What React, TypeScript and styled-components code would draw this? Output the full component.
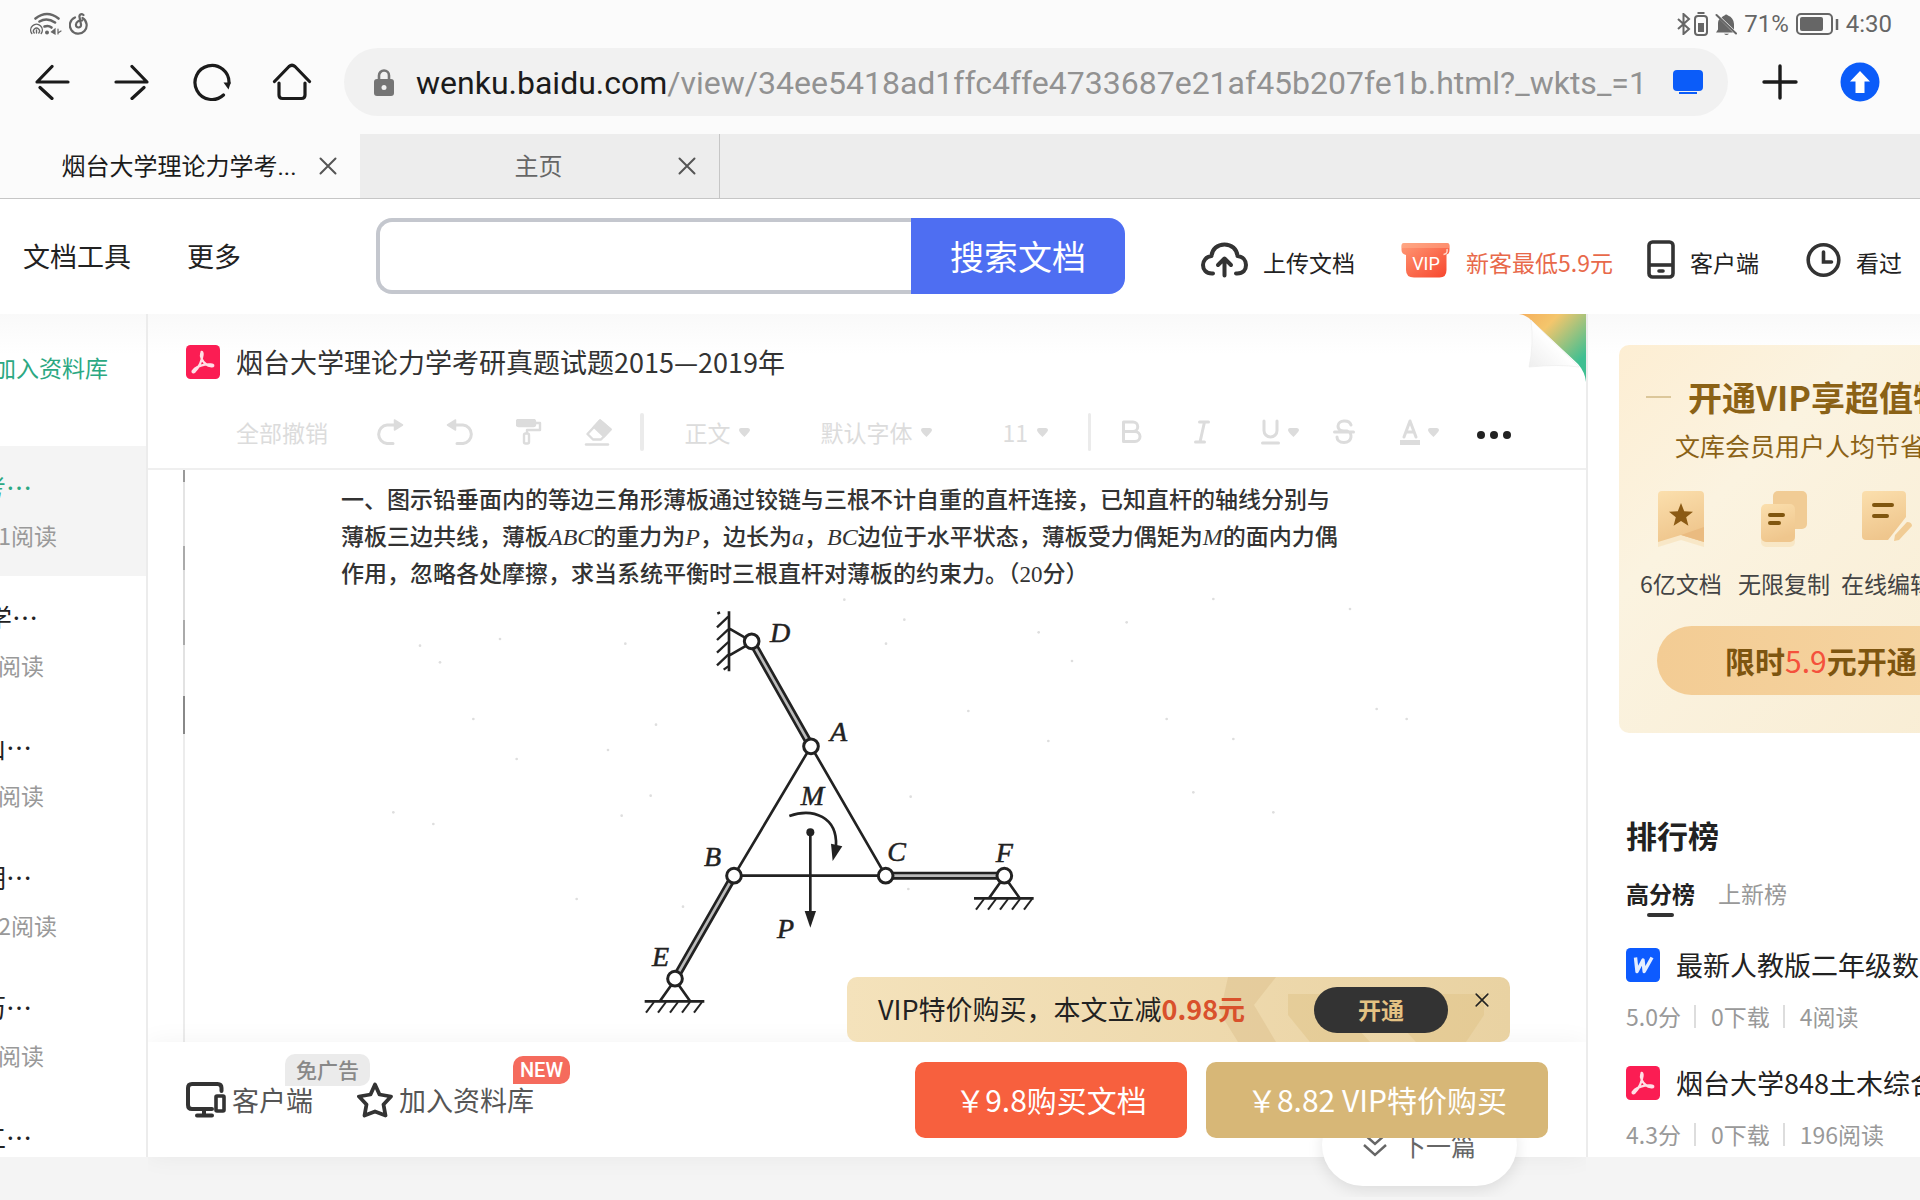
import React from "react";
import styled, { createGlobalStyle } from "styled-components";

const cjk = `"Noto Sans CJK SC", sans-serif`;
const latin = `Roboto, "Noto Sans CJK SC", sans-serif`;

const Global = createGlobalStyle`
  *, *::before, *::after { box-sizing: border-box; }
  html, body { margin: 0; padding: 0; }
  body { background: #f4f4f4; font-family: ${cjk}; color: #222; overflow: hidden; }
  button, input, select { font: inherit; color: inherit; margin: 0; padding: 0; border: 0; background: none; }
  button { cursor: pointer; white-space: nowrap; }
  a { color: inherit; text-decoration: none; }
  h1, h2, h3, p, ul { margin: 0; padding: 0; font-weight: 400; }
  ul { list-style: none; }
  svg { display: block; flex: none; }
`;

const Page = styled.div`
  min-height: 100vh;
  height: 100vh;
  display: flex;
  flex-direction: column;
  overflow: hidden;
  line-height: 36px;
  white-space: nowrap;
`;

/* ---------- device status bar ---------- */

const StatusBar = styled.div`
  height: 48px;
  flex: none;
  display: flex;
  align-items: center;
  justify-content: space-between;
  padding: 0 28px 0 30px;
  background: #fbfbfb;
  color: #666;
  font: 24px/32px ${latin};
`;

const StatusGroup = styled.div`
  display: flex;
  align-items: center;
  gap: ${(p: { $gap: number }) => p.$gap}px;
`;

/* ---------- browser chrome ---------- */

const NavBar = styled.nav`
  height: 86px;
  flex: none;
  display: flex;
  align-items: flex-start;
  padding: 0 40px 0 32px;
  background: #fbfbfb;
`;

const NavButtons = styled.div`
  display: flex;
  gap: 40px;
  height: 68px;
  align-items: center;
`;

const IconButton = styled.button`
  display: flex;
  align-items: center;
  justify-content: center;
  width: 40px;
  height: 40px;
`;

const AddressPill = styled.div`
  flex: 1;
  min-width: 0;
  height: 68px;
  margin: 0 32px;
  padding: 0 24px 0 28px;
  border-radius: 34px;
  background: #f1f1f1;
  display: flex;
  align-items: center;
`;

const Address = styled.div`
  flex: 1;
  min-width: 0;
  margin-left: 20px;
  padding-top: 2px;
  overflow: hidden;
  font: 32px/40px ${latin};
  color: #929292;
`;

const Host = styled.span`
  color: #1b1b1b;
`;

const TabStrip = styled.div`
  height: 65px;
  flex: none;
  display: flex;
  background: #ededed;
  border-bottom: 1px solid #c6c6c6;
`;

const TabItem = styled.div<{ $active?: boolean }>`
  width: 360px;
  height: 64px;
  display: flex;
  align-items: center;
  padding: 0 12px 0 50px;
  background: ${(p) => (p.$active ? "#fbfbfb" : "#ededed")};
  border-right: ${(p) => (p.$active ? "0" : "1px solid #c6c6c6")};
  color: ${(p) => (p.$active ? "#1b1b1b" : "#666")};
  font: 24px/36px ${latin};
`;

const TabTitle = styled.button`
  flex: 1;
  padding-top: 2px;
  text-align: center;
`;

const TabClose = styled(IconButton)`
  color: #555;
`;

/* ---------- site header ---------- */

const SiteHeader = styled.header`
  height: 115px;
  flex: none;
  display: flex;
  align-items: center;
  padding: 0 18px 2px 23px;
  background: #fff;
`;

const MenuLink = styled.a`
  font-size: 27px;
  margin-right: 56px;
`;

const SearchForm = styled.form`
  display: flex;
  flex: 0 0 749px;
  height: 76px;
  margin-left: 79px;
`;

const SearchBox = styled.input`
  flex: 1;
  min-width: 0;
  padding: 0 24px;
  border: 4px solid #c4c7ce;
  border-right: 0;
  border-radius: 16px 0 0 16px;
  background: #fff;
  font-size: 27px;
`;

const SearchButton = styled.button`
  width: 214px;
  border-radius: 0 16px 16px 0;
  background: #4e6ef2;
  color: #fff;
  font-size: 34px;
`;

const HeaderTools = styled.div`
  margin-left: auto;
  display: flex;
  align-items: center;
  padding-top: 8px;
`;

const ToolLink = styled.a<{ $accent?: boolean; $gap: number; $after?: number }>`
  display: flex;
  align-items: center;
  gap: ${(p) => p.$gap}px;
  margin-right: ${(p) => p.$after ?? 0}px;
  font-size: 23px;
  color: ${(p) => (p.$accent ? "#e8694a" : "#222")};

  span { padding-top: 4px; }
`;

/* ---------- three column body ---------- */

const Columns = styled.div`
  flex: 1;
  min-height: 0;
  margin-bottom: 43px;
  display: grid;
  grid-template-columns: 148px minmax(0, 1fr) 332px;
  background: linear-gradient(#f9f9f9, #fff 40px);
`;

const Sidebar = styled.aside`
  border-right: 2px solid #ececec;
  overflow: hidden;
`;

const LibraryLink = styled.a`
  display: flex;
  justify-content: flex-end;
  height: 132px;
  padding: 35px 38px 0 0;
  font-size: 23px;
  color: #2ba882;
`;

const SideItem = styled.li<{ $active?: boolean }>`
  height: 130px;
  padding-top: 23px;
  overflow: hidden;
  background: ${(p) => (p.$active ? "#f4f4f4" : "transparent")};
`;

const SideTitle = styled.a<{ $width: number; $active?: boolean }>`
  display: flex;
  justify-content: flex-end;
  width: ${(p) => p.$width}px;
  overflow: hidden;
  font-size: 26px;
  color: ${(p) => (p.$active ? "#2ba882" : "#222")};
`;

const SideMeta = styled.p<{ $width: number }>`
  display: flex;
  justify-content: flex-end;
  width: ${(p) => p.$width}px;
  margin-top: 12px;
  overflow: hidden;
  font-size: 23px;
  color: #999;
`;

const Main = styled.main`
  position: relative;
  min-width: 0;
  display: flex;
  flex-direction: column;
  border-right: 2px solid #ececec;
`;

const PageFold = styled.div`
  position: absolute;
  top: 0;
  right: 0;
`;

const DocHeading = styled.div`
  flex: none;
  display: flex;
  align-items: center;
  gap: 16px;
  height: 95px;
  padding: 0 0 0 38px;
`;

const DocTitle = styled.h1`
  font-size: 27px;
  color: #333;
`;

const Toolbar = styled.div`
  flex: none;
  display: flex;
  align-items: center;
  height: 61px;
  padding: 0 75px 13px 88px;
  border-bottom: 2px solid #efefef;
  color: #dcdcdc;
  font-size: 23px;
`;

const ToolGroup = styled.div<{ $gap: number; $pad: string }>`
  display: flex;
  align-items: center;
  gap: ${(p) => p.$gap}px;
  padding: ${(p) => p.$pad};
`;

const ToolButton = styled.button`
  display: flex;
  align-items: center;
  gap: 8px;
`;

const Divider = styled.span`
  width: 4px;
  height: 38px;
  border-radius: 2px;
  background: #ebebeb;
`;

const Picker = styled.label`
  display: flex;
  align-items: center;
  gap: 8px;
`;

const PickerSelect = styled.select`
  appearance: none;
  height: 36px;
  outline: 0;
`;

const Scroll = styled.section`
  flex: 1;
  min-height: 0;
  overflow: hidden;
  margin-left: 35px;
  padding: 12px 0 0 158px;
  background: linear-gradient(
      #999 0 12px, #e4e4e4 12px 76px, #aaa 76px 100px, #ddd 100px 150px,
      #aaa 150px 175px, #e2e2e2 175px 226px, #888 226px 264px, #ececec 264px
    )
    0 0 / 2px 100% no-repeat;
`;

const Problem = styled.p`
  font: 500 23px/37px "Liberation Serif", ${cjk};
  color: #333;

  i { font-size: 24px; }
`;

const Figure = styled.svg`
  margin: 16px 0 0 299px;
  overflow: visible;
`;

const BuyBar = styled.div`
  position: relative;
  flex: none;
  height: 115px;
  display: flex;
  align-items: center;
  padding: 0 38px 0 38px;
  background: #fff;
  box-shadow: 0 0 24px rgba(0, 0, 0, 0.05);
  clip-path: inset(-24px 0 -40px 0);
`;

const BarAction = styled.button<{ $after: number }>`
  position: relative;
  display: flex;
  align-items: center;
  gap: 6px;
  margin-right: ${(p) => p.$after}px;
  font-size: 27px;
  color: #555;
`;

const Tag = styled.span<{ $hot?: boolean }>`
  position: absolute;
  bottom: ${(p) => (p.$hot ? 34 : 32)}px;
  right: ${(p) => (p.$hot ? -36 : -57)}px;
  height: ${(p) => (p.$hot ? 28 : 32)}px;
  padding: 0 ${(p) => (p.$hot ? 7 : 11)}px;
  border-radius: 10px 10px 10px 0;
  background: ${(p) => (p.$hot ? "#f56b5d" : "#ebebeb")};
  color: ${(p) => (p.$hot ? "#fff" : "#888")};
  font: ${(p) => (p.$hot ? `500 20px/28px ${latin}` : `500 21px/30px ${cjk}`)};
`;

const BuyButton = styled.button<{ $gold?: boolean }>`
  position: relative;
  z-index: 2;
  width: ${(p) => (p.$gold ? 342 : 272)}px;
  height: 76px;
  margin-left: ${(p) => (p.$gold ? "19px" : "auto")};
  padding-bottom: 2px;
  border-radius: 10px;
  background: ${(p) => (p.$gold ? "#d7b777" : "#f7603e")};
  color: #fff;
  font-size: 30px;
`;

const NextPill = styled.button`
  position: absolute;
  z-index: 1;
  right: 69px;
  bottom: -29px;
  width: 195px;
  height: 82px;
  border-radius: 41px;
  background: #fff;
  box-shadow: 0 4px 16px rgba(0, 0, 0, 0.1);
  display: flex;
  align-items: center;
  justify-content: center;
  gap: 14px;
  color: #666;
  font-size: 25px;
`;

const Promo = styled.div`
  position: absolute;
  z-index: 3;
  right: 76px;
  bottom: 115px;
  width: 663px;
  height: 65px;
  display: flex;
  align-items: center;
  padding: 0 14px 0 31px;
  border-radius: 10px;
  overflow: hidden;
  background: linear-gradient(90deg, #f4e2bb, #e9d2a2);
  font-size: 27px;
`;

const PromoArt = styled.svg`
  position: absolute;
  right: 0;
  top: 0;
`;

const PromoText = styled.p`
  z-index: 1;
  padding-bottom: 2px;
`;

const Price = styled.strong`
  color: #d9512c;
`;

const OpenButton = styled.button`
  position: relative;
  width: 134px;
  height: 46px;
  margin-left: auto;
  padding-bottom: 2px;
  border-radius: 23px;
  background: #333;
  color: #e4c283;
  font-size: 23px;
  font-weight: 700;
`;

const PromoClose = styled.button`
  position: relative;
  width: 28px;
  height: 28px;
  margin: 0 0 20px 20px;
  display: flex;
  align-items: center;
  justify-content: center;
  color: #222;
`;

/* ---------- right column ---------- */

const Aside = styled.aside`
  min-width: 0;
  overflow: hidden;
  padding: 31px 0 0 31px;
`;

const VipCard = styled.section`
  width: 440px;
  height: 388px;
  border-radius: 10px;
  padding: 30px 0 0 16px;
  background: linear-gradient(135deg, #fdeed3, #fbf3e0 30%, #f8ecd2);
  color: #8b6216;
`;

const VipTitle = styled.h2`
  display: flex;
  align-items: center;
  gap: 17px;
  height: 44px;
  padding-left: 11px;
  font-size: 34px;
  font-weight: 700;

  &::before {
    content: "";
    width: 25px;
    height: 2px;
    background: #dcc79a;
  }
`;

const VipNote = styled.p`
  padding-left: 40px;
  margin-top: 8px;
  font-size: 25px;
`;

const Perks = styled.ul`
  display: flex;
  gap: 11px;
  margin-top: 28px;
`;

const Perk = styled.li`
  width: 92px;
  display: flex;
  flex-direction: column;
  align-items: center;
  gap: 14px;
  font-size: 23px;
  color: #444;
`;

const VipButton = styled.button`
  display: block;
  width: 360px;
  height: 69px;
  margin: 25px 0 0 22px;
  padding: 0 0 2px 68px;
  border-radius: 35px;
  background: linear-gradient(90deg, #f3cc94, #f6d6a4);
  color: #7d5510;
  font-size: 30px;
  font-weight: 700;
  text-align: left;
`;

const Deal = styled.span`
  color: #f4513c;
  font-weight: 400;
`;

const Ranking = styled.section`
  padding: 84px 0 0 7px;
`;

const RankHeading = styled.h2`
  font-size: 31px;
  font-weight: 700;
`;

const RankTabs = styled.div`
  display: flex;
  gap: 23px;
  margin-top: 22px;
  height: 46px;
`;

const RankTab = styled.button<{ $active?: boolean }>`
  height: 44px;
  display: flex;
  flex-direction: column;
  align-items: center;
  gap: 2px;
  font-size: 23px;
  line-height: 36px;
  font-weight: ${(p) => (p.$active ? 700 : 400)};
  color: ${(p) => (p.$active ? "#222" : "#999")};

  &::after {
    content: "";
    width: 27px;
    height: 4px;
    border-radius: 2px;
    background: ${(p) => (p.$active ? "#333" : "transparent")};
  }
`;

const RankItem = styled.li`
  height: 118px;
  padding-top: 26px;
`;

const RankLink = styled.a`
  display: flex;
  align-items: center;
  gap: 16px;
  font-size: 27px;
`;

const RankMeta = styled.p`
  display: flex;
  align-items: center;
  margin-top: 15px;
  font-size: 23px;
  color: #999;

  span + span {
    display: flex;
    align-items: center;
  }
  span + span::before {
    content: "";
    width: 2px;
    height: 23px;
    margin: 0 15px 0 13px;
    background: #ddd;
  }
`;

/* ---------- icons ---------- */

const Back = ({ flip }: { flip?: boolean }) => (
  <svg width="36" height="36" viewBox="0 0 36 36" fill="none" stroke="#1b1b1b" strokeWidth="3.2" strokeLinecap="round" strokeLinejoin="round" transform={flip ? "scale(-1 1)" : undefined}>
    <path d="M34 18H3L18 2.500M6 23.500L18 34.500" />
  </svg>
);

const Reload = () => (
  <svg width="40" height="40" viewBox="0 0 40 40" fill="none" stroke="#1b1b1b" strokeWidth="3.200" strokeLinecap="round">
    <path d="M31.500 33A17 17 0 1 1 37 21" />
    <path d="M31.500 20.500l5 7 2.300-7z" fill="#1b1b1b" stroke="none" />
  </svg>
);

const Home = () => (
  <svg width="40" height="40" viewBox="0 0 40 40" fill="none" stroke="#1b1b1b" strokeWidth="3.200" strokeLinecap="round" strokeLinejoin="round">
    <path d="M2.500 19.500L17 4.500q3-2.500 6 0L37.500 19.500" />
    <path d="M7 21v12q0 3.500 3.500 3.500h19q3.500 0 3.500-3.500V21" />
  </svg>
);

const Cross = ({ size, weight }: { size: number; weight: number }) => (
  <svg width={size} height={size} viewBox="0 0 18 18" stroke="currentColor" strokeWidth={weight} strokeLinecap="round">
    <path d="M1.500 1.500l15 15M16.500 1.500l-15 15" />
  </svg>
);

const PdfIcon = () => (
  <svg width="34" height="34" viewBox="0 0 34 34">
    <rect width="34" height="34" rx="4.500" fill="#fb1d53" />
    <path d="M15.300 7.500c-1.300 4 .8 9 5 12 2.500 1.600 6.500 2.600 7 1.300.5-1.600-4.500-1.900-8.500-1.200-4.700.8-10 3.500-12 6.200-.8 1.500.6 2.200 2 .8 3.200-3.500 7-10.500 7.800-16.800.3-2.800-.9-3.700-1.300-2.300z" fill="none" stroke="#ffdfe6" strokeWidth="2.200" strokeLinejoin="round" />
  </svg>
);

const WordIcon = () => (
  <svg width="34" height="34" viewBox="0 0 34 34">
    <rect width="34" height="34" rx="4.500" fill="#0d5bff" />
    <path d="M9.500 9.500l1.500 14 6-11.500 1.200 11.500L26 9.500" fill="none" stroke="#e4edff" strokeWidth="3.400" strokeLinejoin="round" />
  </svg>
);

const Caret = () => (
  <svg width="11" height="9" viewBox="0 0 11 9" fill="currentColor">
    <path d="M2 0h7q2 .3 2 2T5.500 9Q0 4 0 2T2 0z" />
  </svg>
);

const Turn = ({ flip }: { flip?: boolean }) => (
  <svg width="28" height="26" viewBox="0 0 28 26" fill="none" stroke="currentColor" strokeWidth="3" strokeLinecap="round" transform={flip ? "scale(-1 1)" : undefined}>
    <path d="M17 24.500h-6A9.300 9.300 0 0 1 11 6h8" />
    <path d="M18.500 1v10l8-5z" fill="currentColor" strokeWidth="1.500" strokeLinejoin="round" />
  </svg>
);

const Roller = () => (
  <svg width="26" height="26" viewBox="0 0 26 26" fill="none" stroke="currentColor" strokeWidth="2.400" strokeLinejoin="round">
    <rect x="1" y="1" width="18" height="6" rx="1.500" fill="currentColor" />
    <path d="M19 4h5v7H11v4" />
    <rect x="8" y="14.500" width="5" height="10" rx="1.500" />
  </svg>
);

const Eraser = () => (
  <svg width="28" height="27" viewBox="0 0 28 27" fill="none" stroke="currentColor" strokeWidth="2.400" strokeLinejoin="round" strokeLinecap="round">
    <path d="M2 25.500h22" />
    <path d="M9 20.500l-5.500-5.500L16 1.500l10.500 9L17 20.500z" />
    <path d="M10 8L16 1.500l10.500 9L20 17.500z" fill="currentColor" />
  </svg>
);

const Bold = () => (
  <svg width="22" height="24" viewBox="0 0 22 24" fill="none" stroke="currentColor" strokeWidth="3" strokeLinejoin="round">
    <path d="M2.500 2h9.500a4.700 4.700 0 0 1 0 9.500H2.500zM2.500 11.500H14a5 5 0 0 1 0 10H2.500z" />
  </svg>
);

const Italic = () => (
  <svg width="16" height="24" viewBox="0 0 16 24" fill="none" stroke="currentColor" strokeWidth="3" strokeLinecap="round">
    <path d="M5.500 2H14.500M1.500 22H10.500M10.500 2L6 22" />
  </svg>
);

const Underline = () => (
  <svg width="19" height="26" viewBox="0 0 19 26" fill="none" stroke="currentColor" strokeWidth="3" strokeLinecap="round">
    <path d="M3 2v9.500a6.500 6.500 0 0 0 13 0V2M1.500 24h16" />
  </svg>
);

const Strike = () => (
  <svg width="22" height="26" viewBox="0 0 22 26" fill="none" stroke="currentColor" strokeWidth="3" strokeLinecap="round">
    <path d="M18 6c-1.500-5.500-13-5.500-13 1 0 5 6 5 6 5h3c6 1.500 5.500 11.500-3 11.500-5 0-7-3-7-5.500M1.500 13h19" />
  </svg>
);

const FontColor = () => (
  <svg width="20" height="26" viewBox="0 0 20 26" fill="none" stroke="currentColor" strokeWidth="3" strokeLinecap="round" strokeLinejoin="round">
    <path d="M4 18l6-16 6 16M6.500 13h7" />
    <path d="M0 23.500h20" strokeWidth="5" strokeLinecap="butt" />
  </svg>
);

const hatch = (x: number, y: number) =>
  [0, 1, 2, 3, 4].map((i) => <path key={i} d={`M${x + i * 36} ${y}l-24 32`} strokeWidth="6" />);

const specks = [
  [-540, 200], [-480, 250], [-300, 180], [-380, 420], [-250, 540], [-70, 960], [-620, 700], [-500, 735],
  [1416, 246], [1105, 396], [1316, 160], [858, 194], [913, 122], [932, 653], [1345, 486], [1580, 130],
  [1840, 60], [1900, 480], [1780, 640], [2330, 390], [2250, 90], [2420, 420], [1700, 420], [2020, 700],
  [168, 437], [24, 513], [152, 650], [65, 710], [249, 983], [733, 62], [925, 930], [76, 194],
];

const Truss = () => (
  <Figure width="400" height="410" viewBox="120 90 1200 1230" fill="none" stroke="#222" strokeWidth="8" role="img" aria-label="三角形薄板受力图">
    {specks.map(([x, y]) => (
      <circle key={`${x}-${y}`} cx={x} cy={y} r="4" fill="#dedede" stroke="none" />
    ))}
    <path d="M387 97v180M387 148l52 30M387 230l52-30" />
    {[0, 1, 2, 3].map((i) => (
      <path key={i} d={`M385 ${113 + i * 38}l-34 32`} strokeWidth="7" />
    ))}
    <path d="M385 262l-14 10M352 104l8-4" strokeWidth="7" />
    <g strokeWidth="24">
      <path d="M455 187L633 502M402 890L225 1199M857 890H1213" />
    </g>
    <g stroke="#bbb" strokeWidth="8">
      <path d="M455 187L633 502M402 890L225 1199M857 890H1213" />
    </g>
    <path d="M633 502L402 890H857z" />
    <path d="M631 760V1000" />
    <circle cx="631" cy="760" r="12" fill="#222" stroke="none" />
    <path d="M614 996h34l-17 50z" fill="#222" stroke="none" />
    <path d="M568 711C640 685 712 715 708 800" />
    <path d="M693 794l34 8-29 44z" fill="#222" stroke="none" />
    <path d="M214 1218l-34 48M236 1218l34 48M134 1267h179M1202 908l-34 48M1224 908l34 48M1122 958h179" />
    {hatch(162, 1269)}
    {hatch(1152, 960)}
    {[[455, 187], [633, 502], [402, 890], [857, 890], [1213, 890], [225, 1199]].map(([x, y]) => (
      <circle key={`${x}-${y}`} cx={x} cy={y} r="22" strokeWidth="9" fill="#fff" />
    ))}
    <g fill="#222" stroke="#222" strokeWidth="1.500" fontFamily="Liberation Serif, serif" fontStyle="italic" fontSize="84">
      <text x="510" y="190">D</text>
      <text x="690" y="487">A</text>
      <text x="602" y="679">M</text>
      <text x="312" y="860">B</text>
      <text x="862" y="847">C</text>
      <text x="1187" y="849">F</text>
      <text x="531" y="1078">P</text>
      <text x="156" y="1162">E</text>
    </g>
  </Figure>
);

const sideItems = [
  { title: "考…", width: 32, meta: "1阅读", metaWidth: 57, active: true },
  { title: "学…", width: 38, meta: "阅读", metaWidth: 44 },
  { title: "山…", width: 32, meta: "阅读", metaWidth: 44 },
  { title: "期…", width: 32, meta: "2阅读", metaWidth: 57 },
  { title: "历…", width: 32, meta: "阅读", metaWidth: 44 },
  { title: "工…", width: 32, meta: "阅读", metaWidth: 44 },
];

const ranking = [
  { icon: <WordIcon />, title: "最新人教版二年级数学", meta: ["5.0分", "0下载", "4阅读"] },
  { icon: <PdfIcon />, title: "烟台大学848土木综合", meta: ["4.3分", "0下载", "196阅读"] },
];

export default function App() {
  return (
    <>
      <Global />
      <Page>
        <StatusBar>
          <StatusGroup $gap={7}>
            <svg width="32" height="24" viewBox="0 0 32 24" fill="none" stroke="#666" strokeWidth="2.600" strokeLinecap="round">
              <path d="M5.500 6.500Q17-2.500 28.500 6.500M9.500 9.500Q17 5 25 10.500" />
              <path d="M14.500 14.500q4-1.500 7 1" />
              <circle cx="17" cy="20.500" r="2" fill="#666" stroke="none" />
              <path d="M1.800 21.500a5.800 5.800 0 1 1 9.400 0M4.200 21a3 3 0 1 1 4.600 0M6.500 18v3" strokeWidth="1.400" />
              <path d="M21.500 20l3.500-3v5zM28 17v5M31 19l-3 2" strokeWidth="1.200" fill="#666" />
            </svg>
            <svg width="19" height="22" viewBox="0 0 19 22" fill="none" stroke="#666" strokeWidth="2.200" strokeLinecap="round">
              <path d="M6 4.500A8.400 8.400 0 1 0 13.500 5M14.500 2c-2.500-2-4.500 0-4 2l1.500 7.500c.5 4-5.500 4-5 0 .2-2.500 3-4.500 6-4" />
            </svg>
          </StatusGroup>
          <StatusGroup $gap={7}>
            <StatusGroup $gap={3}>
              <svg width="14" height="22" viewBox="0 0 14 22" fill="none" stroke="#666" strokeWidth="2">
                <path d="M1 6l11 10-5.500 5V1L12 6 1 16" />
              </svg>
              <svg width="14" height="24" viewBox="0 0 14 24" fill="none" stroke="#666" strokeWidth="2">
                <path d="M3.500 1h7" />
                <rect x="1" y="4" width="12" height="19" rx="3" />
                <path d="M4 11h6v9H4z" fill="#666" stroke="none" />
              </svg>
            </StatusGroup>
            <svg width="22" height="23" viewBox="0 0 22 23" fill="#666">
              <path d="M1 19.500l2-3V10Q3 7.500 4.500 6L18 19.500zM6.500 4.500Q8 3 9.500 2.500q1.500-2 3.500 0Q18.500 4.500 19 11v5.500zM9 20.800h5q-2.500 2.500-5 0z" />
              <path d="M1.500 2l19.500 18.500" stroke="#666" strokeWidth="2" strokeLinecap="round" />
            </svg>
            <span>71%</span>
            <svg width="43" height="23" viewBox="0 0 43 23" fill="none" stroke="#666" strokeWidth="2">
              <rect x="1" y="1" width="35" height="20" rx="4" />
              <rect x="4" y="4" width="23" height="14" rx="2" fill="#666" stroke="none" />
              <path d="M41 6v11" strokeWidth="2.500" />
            </svg>
            <span>4:30</span>
          </StatusGroup>
        </StatusBar>

        <NavBar>
          <NavButtons>
            <IconButton aria-label="后退"><Back /></IconButton>
            <IconButton aria-label="前进"><Back flip /></IconButton>
            <IconButton aria-label="刷新"><Reload /></IconButton>
            <IconButton aria-label="主页"><Home /></IconButton>
          </NavButtons>
          <AddressPill>
            <svg width="24" height="27" viewBox="0 0 24 27" fill="none">
              <path d="M7 11V6.500a5 5 0 0 1 10 0V11" stroke="#757575" strokeWidth="2.600" />
              <rect x="2" y="10" width="20" height="17" rx="3" fill="#757575" />
              <circle cx="12" cy="18.500" r="2.500" fill="#f1f1f1" />
            </svg>
            <Address>
              <Host>wenku.baidu.com</Host>
              /view/34ee5418ad1ffc4ffe4733687e21af45b207fe1b.html?_wkts_=1
            </Address>
            <svg width="32" height="26" viewBox="0 0 32 26" fill="#0b5cf9">
              <rect x="1" y="1" width="30" height="21" rx="4" />
              <path d="M7 23h18v2H7z" />
            </svg>
          </AddressPill>
          <NavButtons>
            <IconButton aria-label="新建标签页">
              <svg width="36" height="36" viewBox="0 0 36 36" stroke="#1b1b1b" strokeWidth="3.400" strokeLinecap="round">
                <path d="M18 2v32M2 18h32" />
              </svg>
            </IconButton>
            <IconButton aria-label="上传">
              <svg width="40" height="40" viewBox="0 0 40 40">
                <circle cx="20" cy="20" r="19.500" fill="#0b5cf9" />
                <path d="M20 9L30 19.500h-5.500V31h-9V19.500H10z" fill="#fff" />
              </svg>
            </IconButton>
          </NavButtons>
        </NavBar>

        <TabStrip>
          <TabItem $active>
            <TabTitle>烟台大学理论力学考...</TabTitle>
            <TabClose aria-label="关闭标签页"><Cross size={18} weight={2} /></TabClose>
          </TabItem>
          <TabItem>
            <TabTitle>主页</TabTitle>
            <TabClose aria-label="关闭标签页"><Cross size={18} weight={2} /></TabClose>
          </TabItem>
        </TabStrip>

        <SiteHeader>
          <MenuLink href="#tools">文档工具</MenuLink>
          <MenuLink href="#more">更多</MenuLink>
          <SearchForm>
            <SearchBox type="text" aria-label="搜索文档" />
            <SearchButton type="button">搜索文档</SearchButton>
          </SearchForm>
          <HeaderTools>
            <ToolLink href="#upload" $gap={15} $after={46}>
              <svg width="47" height="36" viewBox="0 0 47 36" fill="none" stroke="#333" strokeWidth="4" strokeLinecap="round" strokeLinejoin="round">
                <path d="M12 31.500C4.500 32 2 27 2 23s3-8.500 8.500-9C11 7 16.500 2.500 23.500 2.500S36 7 36.500 14C42 14.500 45 18.500 45 23s-2.500 9-10 8.500" />
                <path d="M23.500 33.500V17M17 23l6.500-6.500L30 23" />
              </svg>
              <span>上传文档</span>
            </ToolLink>
            <ToolLink href="#vip" $accent $gap={16} $after={34}>
              <svg width="49" height="36" viewBox="0 0 49 36">
                <defs>
                  <linearGradient id="vipBag" x1="0" y1="0" x2="1" y2="1">
                    <stop offset="0" stopColor="#ff9a76" />
                    <stop offset="1" stopColor="#f7442c" />
                  </linearGradient>
                </defs>
                <path d="M3 1h43q2.500 0 2.500 3v4q0 4-3 4.500V28q0 7.500-7 7.500H13q-8 0-8-7.500V13Q.5 12 .5 8V4q0-3 2.500-3z" fill="url(#vipBag)" />
                <path d="M3 1h43q2.500 0 2.500 3v2H.5V4Q.5 1 3 1z" fill="#ffb896" opacity=".45" />
                <path d="M46 7q1 5-3.500 5.500" stroke="#ffd9cc" strokeWidth="1.500" fill="none" />
                <text x="25" y="28" textAnchor="middle" fill="#fff" fontFamily="Roboto, sans-serif" fontSize="18">VIP</text>
              </svg>
              <span>新客最低5.9元</span>
            </ToolLink>
            <ToolLink href="#client" $gap={15} $after={47}>
              <svg width="28" height="40" viewBox="0 0 28 40" fill="none" stroke="#333" strokeWidth="3.600">
                <rect x="2" y="2" width="24" height="35" rx="3.500" />
                <path d="M2 25h24" />
                <path d="M12 31h4" strokeLinecap="round" />
              </svg>
              <span>客户端</span>
            </ToolLink>
            <ToolLink href="#history" $gap={15}>
              <svg width="35" height="36" viewBox="0 0 35 36" fill="none" stroke="#333" strokeWidth="3.600">
                <circle cx="17.500" cy="18" r="15.300" />
                <path d="M17.500 10v10h8" strokeLinecap="round" />
              </svg>
              <span>看过</span>
            </ToolLink>
          </HeaderTools>
        </SiteHeader>

        <Columns>
          <Sidebar>
            <LibraryLink href="#library">加入资料库</LibraryLink>
            <ul>
              {sideItems.map((item, i) => (
                <SideItem key={i} $active={item.active}>
                  <SideTitle href="#doc" $width={item.width} $active={item.active}>{item.title}</SideTitle>
                  <SideMeta $width={item.metaWidth}>{item.meta}</SideMeta>
                </SideItem>
              ))}
            </ul>
          </Sidebar>

          <Main>
            <PageFold>
              <svg width="67" height="68" viewBox="0 0 67 68">
                <defs>
                  <linearGradient id="fold" x1="0" y1="0" x2="1" y2="1">
                    <stop offset="0" stopColor="#f5ae5c" />
                    <stop offset=".3" stopColor="#f4c66c" />
                    <stop offset=".8" stopColor="#3fbf92" />
                  </linearGradient>
                  <linearGradient id="curl" x1="1" y1="0" x2="0" y2="1">
                    <stop offset=".5" stopColor="#fff" />
                    <stop offset="1" stopColor="#eee" />
                  </linearGradient>
                </defs>
                <path d="M0 0H67V68Q66 58 59 50L14 8Q8 1 0 0z" fill="url(#fold)" />
                <path d="M12 6Q15 30 10 53Q40 50 60 53Z" fill="url(#curl)" stroke="#eee" strokeWidth=".7" />
              </svg>
            </PageFold>
            <DocHeading>
              <PdfIcon />
              <DocTitle>烟台大学理论力学考研真题试题2015—2019年</DocTitle>
            </DocHeading>
            <Toolbar>
              <ToolButton>全部撤销</ToolButton>
              <ToolGroup $gap={42} $pad="0 28px 0 48px">
                <ToolButton aria-label="重做"><Turn /></ToolButton>
                <ToolButton aria-label="撤销"><Turn flip /></ToolButton>
                <ToolButton aria-label="格式刷"><Roller /></ToolButton>
                <ToolButton aria-label="清除"><Eraser /></ToolButton>
              </ToolGroup>
              <Divider />
              <ToolGroup $gap={71} $pad="0 40px 0 41px">
                <Picker><PickerSelect aria-label="段落样式"><option>正文</option></PickerSelect><Caret /></Picker>
                <Picker><PickerSelect aria-label="字体"><option>默认字体</option></PickerSelect><Caret /></Picker>
                <Picker><PickerSelect aria-label="字号"><option>11</option></PickerSelect><Caret /></Picker>
              </ToolGroup>
              <Divider />
              <ToolGroup $gap={0} $pad="0 0 0 30px">
                <ToolGroup $gap={51} $pad="0 34px 0 0">
                  <ToolButton aria-label="加粗"><Bold /></ToolButton>
                  <ToolButton aria-label="斜体"><Italic /></ToolButton>
                  <ToolButton aria-label="下划线"><Underline /><Caret /></ToolButton>
                </ToolGroup>
                <ToolGroup $gap={45} $pad="0">
                  <ToolButton aria-label="删除线"><Strike /></ToolButton>
                  <ToolButton aria-label="文字颜色"><FontColor /><Caret /></ToolButton>
                </ToolGroup>
              </ToolGroup>
              <ToolGroup $gap={0} $pad="6px 0 0 38px">
                <ToolButton aria-label="更多">
                  <svg width="34" height="8" viewBox="0 0 34 8" fill="#222">
                    <circle cx="4" cy="4" r="4" />
                    <circle cx="17" cy="4" r="4" />
                    <circle cx="30" cy="4" r="4" />
                  </svg>
                </ToolButton>
              </ToolGroup>
            </Toolbar>
            <Scroll>
              <Problem>一、图示铅垂面内的等边三角形薄板通过铰链与三根不计自重的直杆连接，已知直杆的轴线分别与</Problem>
              <Problem>薄板三边共线，薄板<i>ABC</i>的重力为<i>P</i>，边长为<i>a</i>，<i>BC</i>边位于水平状态，薄板受力偶矩为<i>M</i>的面内力偶</Problem>
              <Problem>作用，忽略各处摩擦，求当系统平衡时三根直杆对薄板的约束力。（20分）</Problem>
              <Truss />
            </Scroll>
            <BuyBar>
              <BarAction $after={44}>
                <svg width="40" height="36" viewBox="0 0 40 36" fill="none" stroke="#333" strokeWidth="4" strokeLinejoin="round" strokeLinecap="round">
                  <path d="M35.500 9V6q0-4-4-4H6Q2 2 2 6v17q0 4 4 4h20M18 27v6M11 33.500h15" />
                  <rect x="30" y="14" width="8" height="15" rx="1" strokeWidth="3.600" />
                </svg>
                客户端
                <Tag>免广告</Tag>
              </BarAction>
              <BarAction $after={20}>
                <svg width="36" height="36" viewBox="0 0 36 36" fill="none" stroke="#333" strokeWidth="3.800" strokeLinejoin="round">
                  <path d="M18 2.500L22.500 12.500L34 14.500L26.500 22.500L28.500 33.500L18 29.500L7.500 33.500L9.500 22.500L2 14.500L13.500 12.500Z" />
                </svg>
                加入资料库
                <Tag $hot>NEW</Tag>
              </BarAction>
              <BuyButton>￥9.8购买文档</BuyButton>
              <BuyButton $gold>￥8.82 VIP特价购买</BuyButton>
              <NextPill>
                <svg width="24" height="24" viewBox="0 0 24 24" fill="none" stroke="#666" strokeWidth="2.400">
                  <path d="M1 1l11 10L23 1M1 12l11 10 11-10" />
                </svg>
                下一篇
              </NextPill>
            </BuyBar>
            <Promo>
              <PromoArt width="300" height="65" viewBox="0 0 300 65">
                <path d="M18 0H66L44 28L66 65H28L10 36Z" fill="#dfc592" opacity=".6" />
                <path d="M78 17H274V38L256 65H206L196 54H150L160 65H100L78 38Z" fill="#e0c48a" opacity=".55" />
              </PromoArt>
              <PromoText>VIP特价购买，本文立减<Price>0.98元</Price></PromoText>
              <OpenButton>开通</OpenButton>
              <PromoClose aria-label="关闭"><Cross size={14} weight={2} /></PromoClose>
            </Promo>
          </Main>

          <Aside>
            <VipCard>
              <VipTitle>开通VIP享超值特权</VipTitle>
              <VipNote>文库会员用户人均节省</VipNote>
              <Perks>
                <Perk>
                  <svg width="48" height="60" viewBox="0 0 48 60">
                    <defs>
                      <linearGradient id="gold" x1="0" y1="0" x2=".3" y2="1">
                        <stop offset="0" stopColor="#fbdfad" />
                        <stop offset="1" stopColor="#efc68d" />
                      </linearGradient>
                    </defs>
                    <path d="M1 56V8q0-3 3-3h40q3 0 3 3v48L24 49z" fill="#f6dfb5" opacity=".6" />
                    <path d="M1 51V4q0-4 4-4h38q4 0 4 4v47L24 44z" fill="url(#gold)" />
                    <path d="M24 44l23-8v15z" fill="#eabb80" />
                    <path d="M24 12l3.200 8.200 8.800.5-6.800 5.600 2.200 8.500L24 30l-7.400 4.800 2.200-8.500L12 20.700l8.800-.5z" fill="#8b5a14" />
                  </svg>
                  6亿文档
                </Perk>
                <Perk>
                  <svg width="48" height="60" viewBox="0 0 48 60">
                    <rect x="13" y="0" width="34" height="38" rx="5" fill="#f1cc95" />
                    <rect x="1" y="18" width="34" height="38" rx="5" fill="#f6dfb5" opacity=".6" />
                    <rect x="1" y="13" width="34" height="38" rx="5" fill="url(#gold)" />
                    <path d="M10 24h13M10 32h9" stroke="#80560f" strokeWidth="4" strokeLinecap="round" />
                  </svg>
                  无限复制
                </Perk>
                <Perk>
                  <svg width="52" height="60" viewBox="0 0 52 60">
                    <path d="M5 0h36q4 0 4 4v22L27 49H5q-4 0-4-4V4q0-4 4-4z" fill="url(#gold)" />
                    <path d="M46 31q5 0 5 4L38 49l-5 1 1-6z" fill="#f1cc95" />
                    <path d="M13 14h18M13 25h13" stroke="#80560f" strokeWidth="4" strokeLinecap="round" />
                  </svg>
                  在线编辑
                </Perk>
              </Perks>
              <VipButton>限时<Deal>5.9</Deal>元开通</VipButton>
            </VipCard>
            <Ranking>
              <RankHeading>排行榜</RankHeading>
              <RankTabs>
                <RankTab $active>高分榜</RankTab>
                <RankTab>上新榜</RankTab>
              </RankTabs>
              <ul>
                {ranking.map((r) => (
                  <RankItem key={r.title}>
                    <RankLink href="#rank">{r.icon}{r.title}</RankLink>
                    <RankMeta>{r.meta.map((m) => <span key={m}>{m}</span>)}</RankMeta>
                  </RankItem>
                ))}
              </ul>
            </Ranking>
          </Aside>
        </Columns>
      </Page>
    </>
  );
}
